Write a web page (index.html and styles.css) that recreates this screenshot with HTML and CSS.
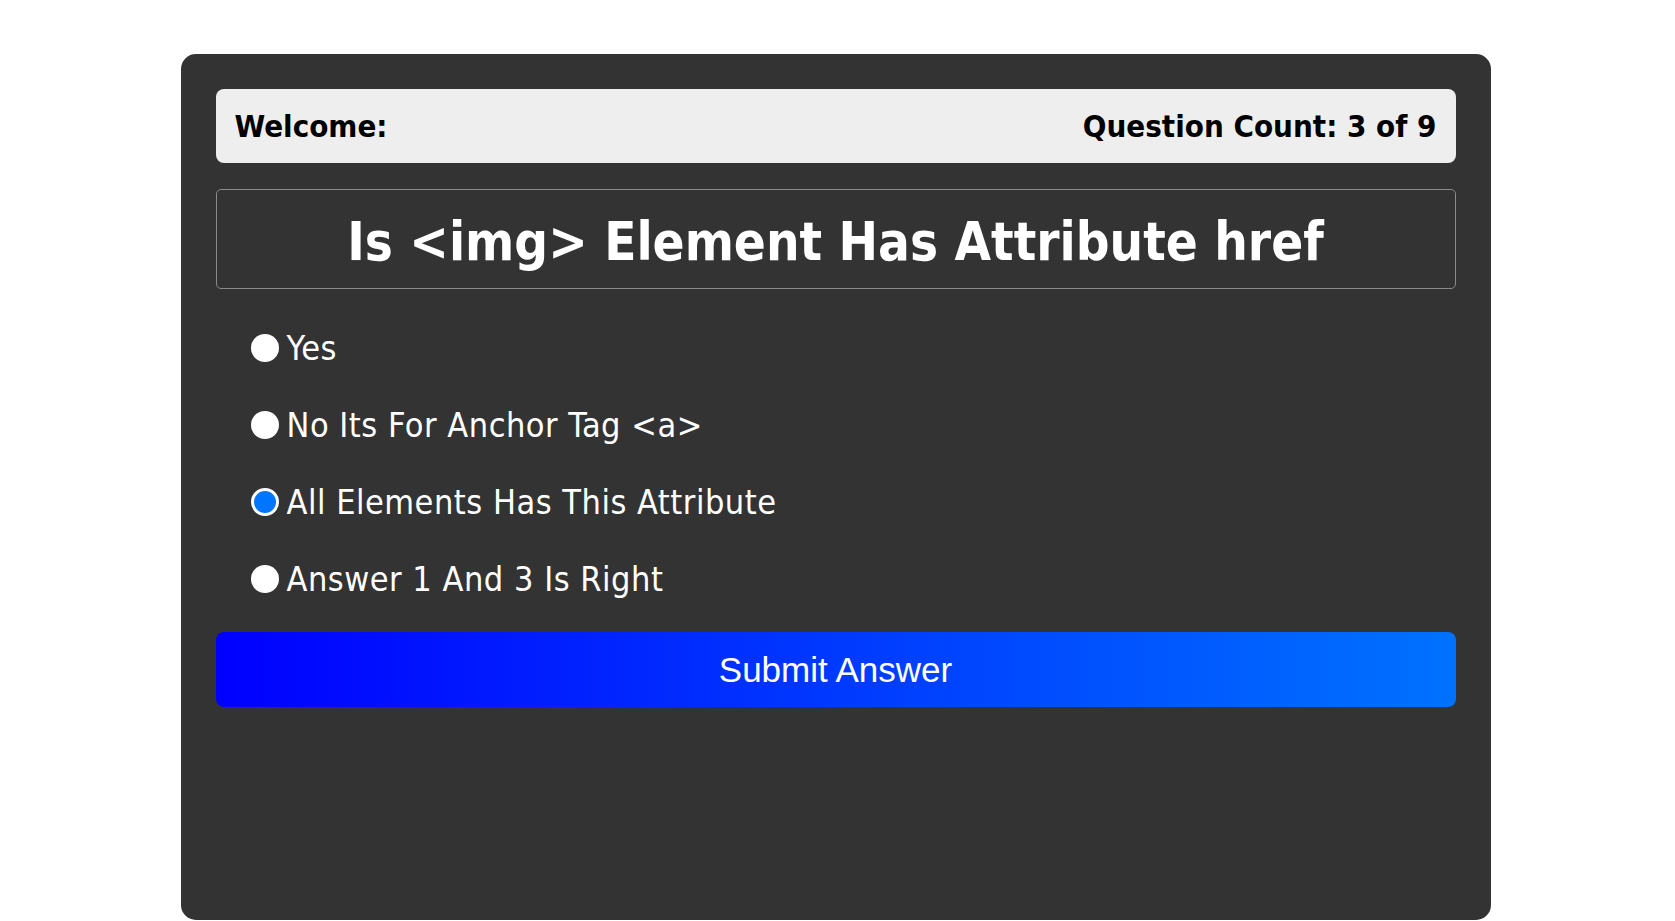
FILE: index.html
```html
<!DOCTYPE html>
<html lang="en">
<head>
<meta charset="utf-8">
<title>Quiz</title>
<link rel="stylesheet" href="styles.css">
</head>
<body>
<div class="page">
  <main class="card">
    <div class="info">
      <span class="welcome">Welcome:</span>
      <span class="count">Question Count: 3 of 9</span>
    </div>
    <h1 class="question">Is &lt;img&gt; Element Has Attribute href</h1>
    <form class="answers">
      <label class="answer"><input type="radio" name="q" class="radio"><span class="answer-text">Yes</span></label>
      <label class="answer"><input type="radio" name="q" class="radio"><span class="answer-text">No Its For Anchor Tag &lt;a&gt;</span></label>
      <label class="answer"><input type="radio" name="q" class="radio" checked><span class="answer-text">All Elements Has This Attribute</span></label>
      <label class="answer"><input type="radio" name="q" class="radio"><span class="answer-text">Answer 1 And 3 Is Right</span></label>
      <button type="button" class="submit">Submit Answer</button>
    </form>
  </main>
</div>
</body>
</html>
```

FILE: styles.css
```css
html, body {
  margin: 0;
  padding: 0;
  background: #ffffff;
  overflow: hidden;
}

.page {
  display: flex;
  justify-content: center;
  padding-top: 54px;
  padding-right: 4px;
  height: 921px;
  box-sizing: border-box;
}

.card {
  width: 1310px;
  height: 866px;
  box-sizing: border-box;
  background: #333333;
  border-radius: 15px;
  padding: 35px;
  display: flex;
  flex-direction: column;
}

.info {
  height: 74px;
  box-sizing: border-box;
  background: #eeeeee;
  border-radius: 8px;
  padding: 0 19px;
  display: flex;
  justify-content: space-between;
  align-items: center;
  font-family: "DejaVu Sans Condensed", "DejaVu Sans", sans-serif;
  font-weight: bold;
  font-size: 31px;
  color: #000000;
}

.question {
  margin: 26px 0 0 0;
  height: 100px;
  box-sizing: border-box;
  border: 1px solid #8a8a8a;
  border-radius: 5px;
  padding-top: 4px;
  display: flex;
  align-items: center;
  justify-content: center;
  font-family: "DejaVu Sans Condensed", "DejaVu Sans", sans-serif;
  font-weight: bold;
  font-size: 52.5px;
  color: #ffffff;
}

.answers {
  margin: 20px 0 0 0;
  display: flex;
  flex-direction: column;
}

.answer {
  height: 77px;
  display: flex;
  align-items: center;
  padding-left: 35px;
  gap: 8px;
}

.radio {
  appearance: none;
  -webkit-appearance: none;
  margin: 0;
  width: 28px;
  height: 28px;
  border-radius: 50%;
  background: #ffffff;
  box-sizing: border-box;
  flex: none;
}

.radio:checked {
  background: #0075ff;
  border: 3px solid #ffffff;
}

.answer-text {
  font-family: "DejaVu Sans Condensed", "DejaVu Sans", sans-serif;
  font-size: 34px;
  letter-spacing: 0.5px;
  color: #ffffff;
}

.submit {
  margin-top: 15px;
  height: 75px;
  border: none;
  border-radius: 8px;
  background: linear-gradient(to right, #0000ff, #0072ff);
  color: #ffffff;
  font-family: "Liberation Sans", Arial, sans-serif;
  font-size: 35px;
}
```
